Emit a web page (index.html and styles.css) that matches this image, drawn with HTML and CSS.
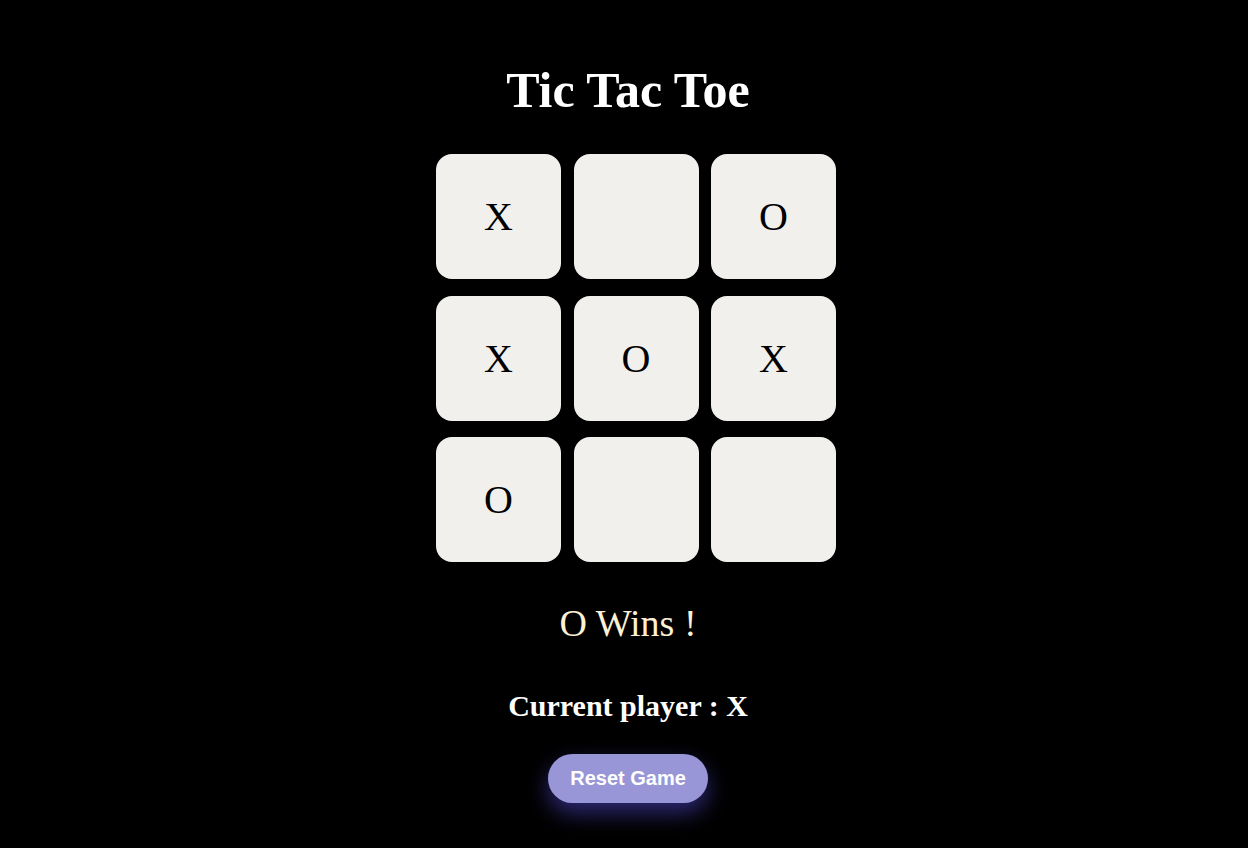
FILE: index.html
```html
<!DOCTYPE html>
<html>
<head>
<meta charset="utf-8">
<link rel="stylesheet" href="styles.css">
</head>
<body>
<main class="game">
  <h1 class="title">Tic Tac Toe</h1>
  <div class="board">
    <button class="cell">X</button>
    <button class="cell"></button>
    <button class="cell">O</button>
    <button class="cell">X</button>
    <button class="cell">O</button>
    <button class="cell">X</button>
    <button class="cell">O</button>
    <button class="cell"></button>
    <button class="cell"></button>
  </div>
  <p class="status">O Wins !</p>
  <h2 class="player">Current player : X</h2>
  <button class="reset">Reset Game</button>
</main>
</body>
</html>
```
FILE: styles.css
```css
html, body {
  margin: 0;
  padding: 0;
  background: #000;
  font-family: "Liberation Serif", "Times New Roman", serif;
  min-height: 848px;
}
.game {
  display: flex;
  flex-direction: column;
  align-items: center;
  padding: 0 0 40px 8px;
}
.title {
  color: #fff;
  font-size: 50px;
  font-weight: bold;
  margin: 62px 0 0;
  line-height: 56px;
}
.board {
  display: grid;
  grid-template-columns: repeat(3, 125px);
  grid-auto-rows: 125px;
  column-gap: 12.5px;
  row-gap: 16.5px;
  margin: 36px 0 0 16px;
}
.cell {
  background: #f1f0ed;
  border: none;
  border-radius: 16px;
  font-family: "Liberation Serif", "Times New Roman", serif;
  font-size: 40px;
  color: #000;
  padding: 0;
}
.status {
  color: #fdf0d5;
  font-size: 38px;
  margin: 39px 0 0;
  line-height: 44px;
}
.player {
  color: #fff;
  font-size: 30px;
  font-weight: bold;
  margin: 44px 0 0;
  line-height: 34px;
}
.reset {
  margin-top: 31px;
  width: 160px;
  height: 49px;
  border: none;
  border-radius: 25px;
  background: #9896d6;
  color: #fff;
  font-family: "Liberation Sans", Arial, sans-serif;
  font-weight: bold;
  font-size: 20px;
  box-shadow: 0 10px 22px rgba(90, 80, 230, 0.5);
}
```
